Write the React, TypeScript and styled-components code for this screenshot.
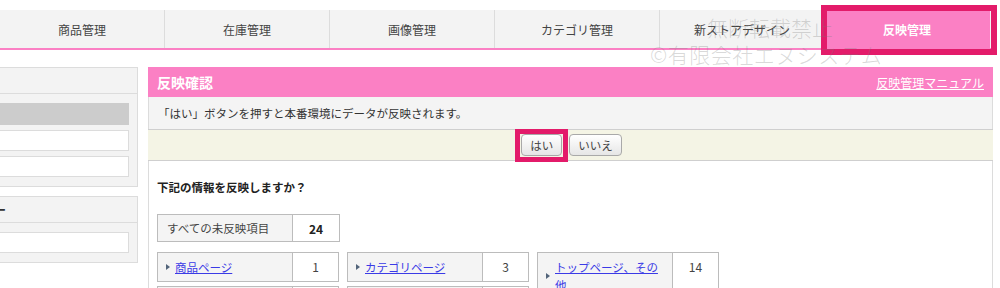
import React from 'react';
import styled, { createGlobalStyle } from 'styled-components';

const PINK = '#fb80c4';
const MARK = '#e31b6a';

const GlobalStyle = createGlobalStyle`
  body {
    margin: 0;
    background: #fff;
    font-family: "Noto Sans CJK JP", "Noto Sans", sans-serif;
    color: #333;
  }
`;

const tabs = ['商品管理', '在庫管理', '画像管理', 'カテゴリ管理', '新ストアデザイン', '反映管理'];

const columns = [
  [
    { label: '商品ページ', count: 1 },
    { label: '新着商品', count: 0 },
  ],
  [
    { label: 'カテゴリページ', count: 3 },
    { label: '特集ページ', count: 0 },
  ],
  [
    { label: 'トップページ、その他', count: 14 },
    { label: 'デザイン', count: 6 },
  ],
];

const App = () => {
  return (
    <Page>
      <GlobalStyle />
      <Nav>
        {tabs.map((t, i) => (
          <Tab key={t} active={i === tabs.length - 1}>
            {t}
            {i === tabs.length - 1 && <TabMark />}
          </Tab>
        ))}
      </Nav>

      <Content>
        <Sidebar>
          <SideBox>
            <SideHead>商品検索</SideHead>
            <SideBody>
              <SideBar />
              <SideInput />
              <SideInput />
            </SideBody>
          </SideBox>
          <SideBox>
            <SideHead>カテゴリー</SideHead>
            <SideBody>
              <SideInput />
            </SideBody>
          </SideBox>
        </Sidebar>

        <Main>
          <PanelHead>
            <PanelTitle>反映確認</PanelTitle>
            <ManualLink href="#">反映管理マニュアル</ManualLink>
          </PanelHead>
          <Info>「はい」ボタンを押すと本番環境にデータが反映されます。</Info>
          <ButtonRow>
            <ButtonWrap>
              <Button>はい</Button>
              <ButtonMark />
            </ButtonWrap>
            <Button>いいえ</Button>
          </ButtonRow>
          <Body>
            <Question>下記の情報を反映しますか？</Question>
            <Summary>
              <SumLabel>すべての未反映項目</SumLabel>
              <SumValue>24</SumValue>
            </Summary>
            <Columns>
              {columns.map((col, ci) => (
                <Column key={ci}>
                  {col.map((item) => (
                    <Item key={item.label}>
                      <ItemLabel>
                        <ItemLink href="#">{item.label}</ItemLink>
                      </ItemLabel>
                      <ItemValue>{item.count}</ItemValue>
                    </Item>
                  ))}
                </Column>
              ))}
            </Columns>
          </Body>
        </Main>
      </Content>

      <Watermark>
        <WmLine1>無断転載禁止</WmLine1>
        <WmLine2>©有限会社エヌシステム</WmLine2>
      </Watermark>
    </Page>
  );
};

export default App;

const Page = styled.div`
  position: relative;
  width: 1000px;
  height: 288px;
  overflow: hidden;
  padding-top: 10px;
  box-sizing: border-box;
`;

const Nav = styled.div`
  display: flex;
  width: 993px;
  height: 38px;
  background: #f3f3f3;
  border-bottom: 2px solid ${PINK};
`;

const Tab = styled.div<{ active?: boolean }>`
  position: relative;
  width: 165px;
  box-sizing: border-box;
  display: flex;
  align-items: center;
  justify-content: center;
  font-size: 12px;
  border-right: 1px solid ${({ active }) => (active ? PINK : '#dcdcdc')};
  background: ${({ active }) => (active ? PINK : 'transparent')};
  color: ${({ active }) => (active ? '#fff' : '#444')};
  font-weight: ${({ active }) => (active ? 'bold' : 'normal')};
  padding-top: 1px;
`;

const TabMark = styled.div`
  position: absolute;
  top: -5px;
  left: -4px;
  right: -8px;
  bottom: -7px;
  border: 6px solid ${MARK};
  pointer-events: none;
`;

const Content = styled.div`
  display: flex;
  gap: 10px;
  margin-top: 17px;
`;

const Sidebar = styled.div`
  width: 138px;
  overflow: hidden;
  display: flex;
  flex-direction: column;
  gap: 9px;
`;

const SideBox = styled.div`
  margin-left: -65px;
  width: 203px;
  box-sizing: border-box;
  border: 1px solid #dcdcdc;
  background: #f3f3f3;
`;

const SideHead = styled.div`
  height: 25px;
  line-height: 25px;
  padding-left: 10px;
  font-size: 12px;
  font-weight: bold;
  color: #333;
  border-bottom: 1px solid #dcdcdc;
`;

const SideBody = styled.div`
  display: flex;
  flex-direction: column;
  gap: 5px;
  padding: 9px 8px 9px 0;
`;

const SideBar = styled.div`
  height: 22px;
  background: #cccccc;
`;

const SideInput = styled.div`
  height: 19px;
  background: #fff;
  border: 1px solid #dcdcdc;
`;

const Main = styled.div`
  width: 845px;
  display: flex;
  flex-direction: column;
`;

const PanelHead = styled.div`
  height: 30px;
  background: ${PINK};
  display: flex;
  align-items: center;
  justify-content: space-between;
  padding: 0 9px;
`;

const PanelTitle = styled.div`
  color: #fff;
  font-size: 14px;
  font-weight: bold;
`;

const ManualLink = styled.a`
  color: #fff;
  font-size: 12px;
  text-decoration: underline;
`;

const Info = styled.div`
  height: 32px;
  display: flex;
  align-items: center;
  padding-left: 9px;
  background: #f4f4f4;
  font-size: 11.5px;
  color: #333;
  border-left: 1px solid #dcdcdc;
  border-right: 1px solid #dcdcdc;
`;

const ButtonRow = styled.div`
  height: 30px;
  display: flex;
  align-items: center;
  justify-content: center;
  gap: 7px;
  background: #f4f4e5;
  border-top: 1px solid #cfcfcf;
  border-bottom: 1px solid #cfcfcf;
  padding-left: 2px;
`;

const ButtonWrap = styled.div`
  position: relative;
  display: flex;
`;

const Button = styled.button`
  height: 22px;
  padding: 0 8px;
  font-family: inherit;
  font-size: 11.5px;
  color: #444;
  background: linear-gradient(#ffffff, #e6e6e6);
  border: 1px solid #a9a9a9;
  border-radius: 4px;
  cursor: pointer;
`;

const ButtonMark = styled.div`
  position: absolute;
  top: -5px;
  left: -6px;
  right: -6px;
  bottom: -6px;
  border: 5px solid ${MARK};
  pointer-events: none;
`;

const Body = styled.div`
  flex: 1;
  background: #fff;
  border-left: 1px solid #dcdcdc;
  border-right: 1px solid #dcdcdc;
  padding: 18px 8px 0;
`;

const Question = styled.div`
  font-size: 11.5px;
  font-weight: bold;
  line-height: 16px;
  color: #222;
`;

const Summary = styled.div`
  display: flex;
  width: 183px;
  height: 28px;
  margin-top: 19px;
  border: 1px solid #bcbcbc;
  box-sizing: border-box;
`;

const SumLabel = styled.div`
  width: 135px;
  display: flex;
  align-items: center;
  padding-left: 9px;
  box-sizing: border-box;
  background: #f4f4f4;
  border-right: 1px solid #bcbcbc;
  font-size: 11.5px;
  color: #444;
`;

const SumValue = styled.div`
  flex: 1;
  display: flex;
  align-items: center;
  justify-content: center;
  font-size: 12px;
  font-weight: bold;
  color: #222;
`;

const Columns = styled.div`
  display: flex;
  gap: 8px;
  margin-top: 10px;
`;

const Column = styled.div`
  display: flex;
  flex-direction: column;
  gap: 4px;
  width: 182px;
`;

const Item = styled.div`
  display: flex;
  border: 1px solid #bcbcbc;
  box-sizing: border-box;
`;

const ItemLabel = styled.div`
  position: relative;
  width: 135px;
  box-sizing: border-box;
  padding: 5px 5px 5px 17px;
  display: flex;
  align-items: center;
  background: #f4f4f4;
  border-right: 1px solid #bcbcbc;
  font-size: 11.5px;
  line-height: 18px;
  &::before {
    content: '';
    position: absolute;
    left: 8px;
    top: 50%;
    margin-top: -3px;
    border-left: 4px solid #52647a;
    border-top: 3px solid transparent;
    border-bottom: 3px solid transparent;
  }
`;

const ItemLink = styled.a`
  color: #3b3be6;
  text-decoration: underline;
`;

const ItemValue = styled.div`
  flex: 1;
  text-align: center;
  padding-top: 5px;
  font-size: 12px;
  line-height: 18px;
  color: #444;
`;

const Watermark = styled.div`
  position: absolute;
  top: 13px;
  left: 650px;
  width: 250px;
  pointer-events: none;
  font-family: "Noto Sans CJK JP", sans-serif;
  font-weight: 300;
  color: rgba(120, 120, 120, 0.28);
`;

const WmLine1 = styled.div`
  margin-left: 57px;
  font-size: 21px;
  line-height: 28px;
`;

const WmLine2 = styled.div`
  font-size: 21px;
  line-height: 26px;
  letter-spacing: 0.5px;
`;
